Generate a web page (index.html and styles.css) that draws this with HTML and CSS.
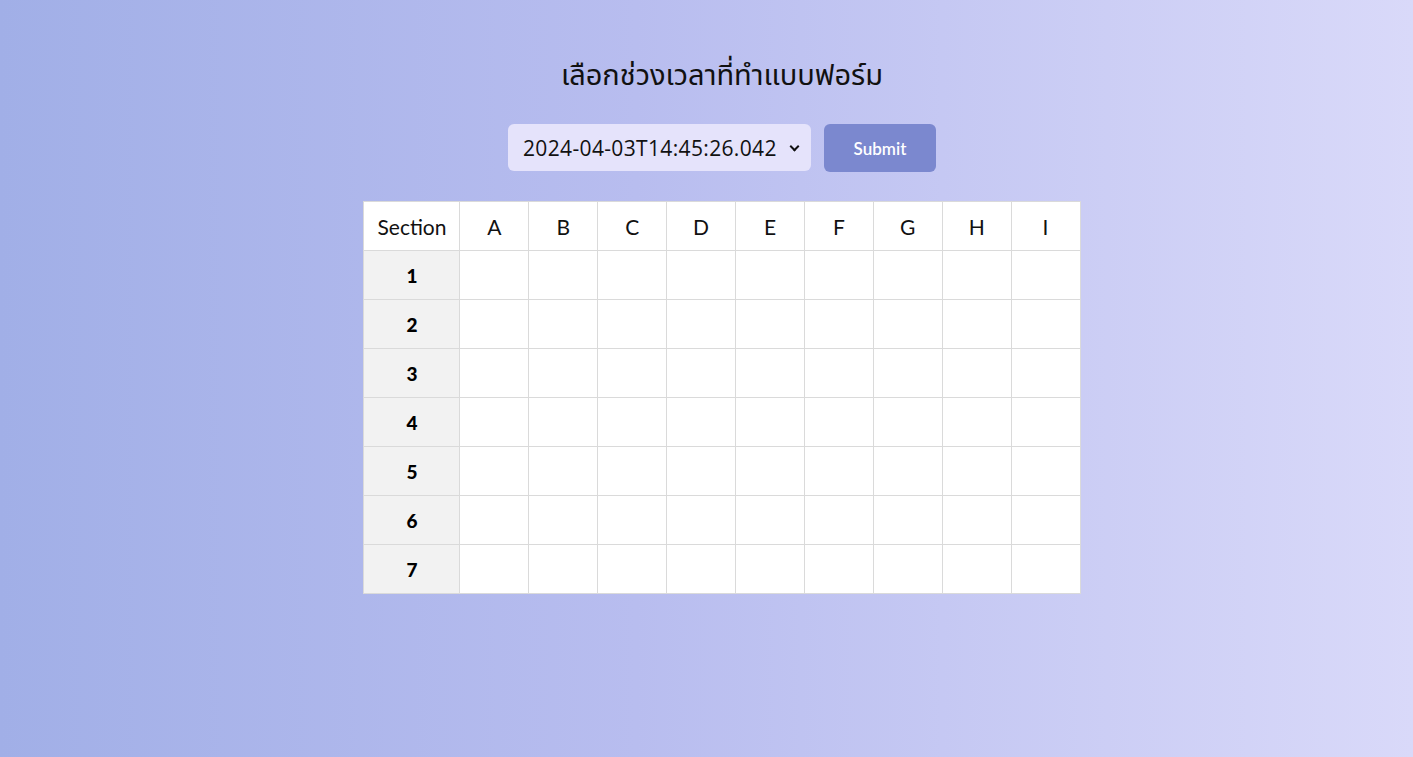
FILE: index.html
```html
<!DOCTYPE html>
<html lang="th">
<head>
<meta charset="utf-8">
<title>เลือกช่วงเวลาที่ทำแบบฟอร์ม</title>
<link rel="stylesheet" href="styles.css">
</head>
<body>
<main class="page">
  <h1 class="title">เลือกช่วงเวลาที่ทำแบบฟอร์ม</h1>
  <form class="controls">
    <div class="select-wrap">
      <select class="select">
        <option>2024-04-03T14:45:26.042</option>
      </select>
    </div>
    <button type="button" class="submit">Submit</button>
  </form>
  <table class="grid">
    <colgroup>
      <col class="c-sec"><col><col><col><col><col><col><col><col><col>
    </colgroup>
    <thead>
      <tr><th>Section</th><th>A</th><th>B</th><th>C</th><th>D</th><th>E</th><th>F</th><th>G</th><th>H</th><th>I</th></tr>
    </thead>
    <tbody>
      <tr><th class="num">1</th><td></td><td></td><td></td><td></td><td></td><td></td><td></td><td></td><td></td></tr>
      <tr><th class="num">2</th><td></td><td></td><td></td><td></td><td></td><td></td><td></td><td></td><td></td></tr>
      <tr><th class="num">3</th><td></td><td></td><td></td><td></td><td></td><td></td><td></td><td></td><td></td></tr>
      <tr><th class="num">4</th><td></td><td></td><td></td><td></td><td></td><td></td><td></td><td></td><td></td></tr>
      <tr><th class="num">5</th><td></td><td></td><td></td><td></td><td></td><td></td><td></td><td></td><td></td></tr>
      <tr><th class="num">6</th><td></td><td></td><td></td><td></td><td></td><td></td><td></td><td></td><td></td></tr>
      <tr><th class="num">7</th><td></td><td></td><td></td><td></td><td></td><td></td><td></td><td></td><td></td></tr>
    </tbody>
  </table>
</main>
</body>
</html>
```
FILE: styles.css
```css
html, body {
  margin: 0;
  height: 100%;
}
body {
  background: linear-gradient(90deg, #a1afe7 0%, #b8bdef 45%, #d9d9f9 100%);
  font-family: Lato, "Noto Sans", "Noto Sans Thai", sans-serif;
  color: #111;
}
.page {
  display: flex;
  flex-direction: column;
  align-items: center;
  padding: 54px 0 0 31px;
}
.title {
  margin: 0;
  font-size: 29px;
  font-weight: 400;
  line-height: 40px;
  color: #111;
}
.controls {
  display: flex;
  gap: 13px;
  margin-top: 30px;
}
.select-wrap {
  position: relative;
}
.select {
  appearance: none;
  -webkit-appearance: none;
  width: 303px;
  height: 47px;
  border: none;
  border-radius: 6px;
  background: #e5e3fb;
  font-family: "Open Sans", Lato, sans-serif;
  font-size: 21px;
  letter-spacing: 0.35px;
  color: #111;
  padding: 0 28px 0 15px;
  outline: none;
  overflow: hidden;
  text-overflow: clip;
  white-space: nowrap;
}
.select-wrap::after {
  content: "";
  position: absolute;
  right: 13px;
  top: 19px;
  width: 5px;
  height: 5px;
  border-right: 2px solid #111;
  border-bottom: 2px solid #111;
  transform: rotate(45deg);
  pointer-events: none;
}
.submit {
  width: 112px;
  height: 48px;
  border: none;
  border-radius: 6px;
  background: #7b88cf;
  color: #fff;
  font-family: Lato, sans-serif;
  font-size: 17px;
  font-weight: 600;
}
.grid {
  margin-top: 29px;
  border-collapse: collapse;
  table-layout: fixed;
  width: 716px;
  background: #fff;
}
.grid col { width: 68.9px; }
.grid col.c-sec { width: 96px; }
.grid th, .grid td {
  border: 1px solid #dadada;
  height: 48px;
  padding: 0;
  text-align: center;
}
.grid thead th {
  font-weight: 400;
  font-size: 21px;
  color: #111;
}
.grid .num {
  background: #f2f2f2;
  font-weight: 900;
  font-size: 19px;
  color: #000;
}
```
